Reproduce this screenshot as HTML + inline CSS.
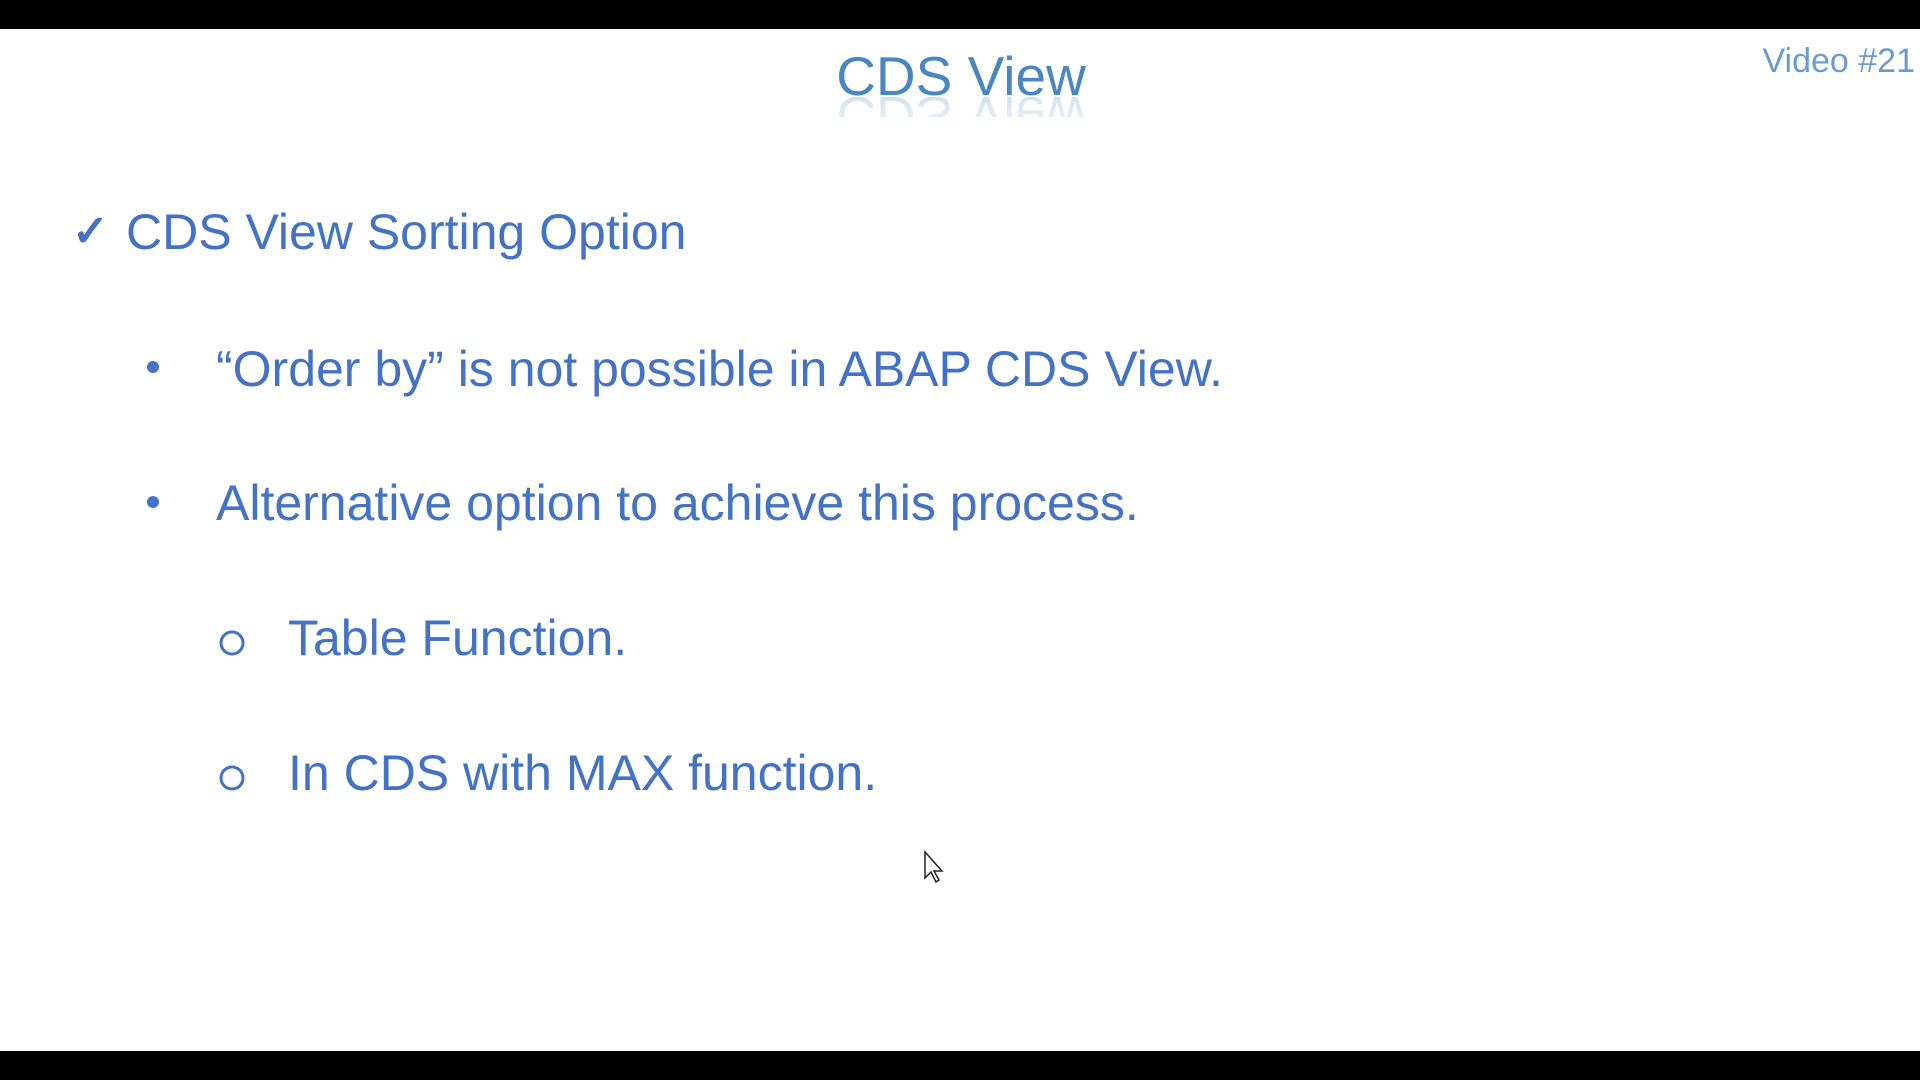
<!DOCTYPE html>
<html><head><meta charset="utf-8"><style>
html,body{margin:0;padding:0;background:#fff;width:1920px;height:1080px;overflow:hidden}
svg{display:block}
text{font-family:"Liberation Sans",sans-serif}
</style></head><body>
<svg width="1920" height="1080" viewBox="0 0 1920 1080" xmlns="http://www.w3.org/2000/svg">
<defs>
<linearGradient id="rf" x1="0" y1="0" x2="0" y2="1">
<stop offset="0" stop-color="#4a86c0" stop-opacity="0"/>
<stop offset="1" stop-color="#4a86c0" stop-opacity="0.3"/>
</linearGradient>
<clipPath id="cp"><rect x="0" y="97" width="1920" height="20"/></clipPath>
</defs>
<rect x="0" y="0" width="1920" height="1080" fill="#fff"/>
<rect x="0" y="0" width="1920" height="29" fill="#000"/>
<rect x="0" y="1051" width="1920" height="29" fill="#000"/>
<text x="961" y="95" text-anchor="middle" font-size="55" fill="#4a86c0">CDS View</text>
<g clip-path="url(#cp)"><text x="961" y="95" text-anchor="middle" font-size="55" fill="url(#rf)" transform="translate(0,192) scale(1,-1)">CDS View</text></g>
<text x="1915" y="72" text-anchor="end" font-size="34" fill="#6a9bd0">Video #21</text>
<g fill="#4472c4">
<text x="72" y="246" font-size="44" font-weight="bold">✓</text>
<text x="126" y="249" font-size="50">CDS View Sorting Option</text>
<circle cx="153" cy="367" r="6"/>
<text x="216" y="386" font-size="50">“Order by” is not possible in ABAP CDS View.</text>
<circle cx="153" cy="502" r="6"/>
<text x="216" y="520" font-size="50">Alternative option to achieve this process.</text>
<text x="288" y="655" font-size="50">Table Function.</text>
<text x="288" y="790" font-size="50">In CDS with MAX function.</text>
</g>
<circle cx="232" cy="643" r="11" fill="none" stroke="#4472c4" stroke-width="3"/>
<circle cx="232" cy="778" r="11" fill="none" stroke="#4472c4" stroke-width="3"/>
<path d="M925 852 L925 878 L931 872 L936 882 L939 880 L934 871 L942 871 Z" fill="#fff" stroke="#222" stroke-width="1.5"/>
</svg>
</body></html>
